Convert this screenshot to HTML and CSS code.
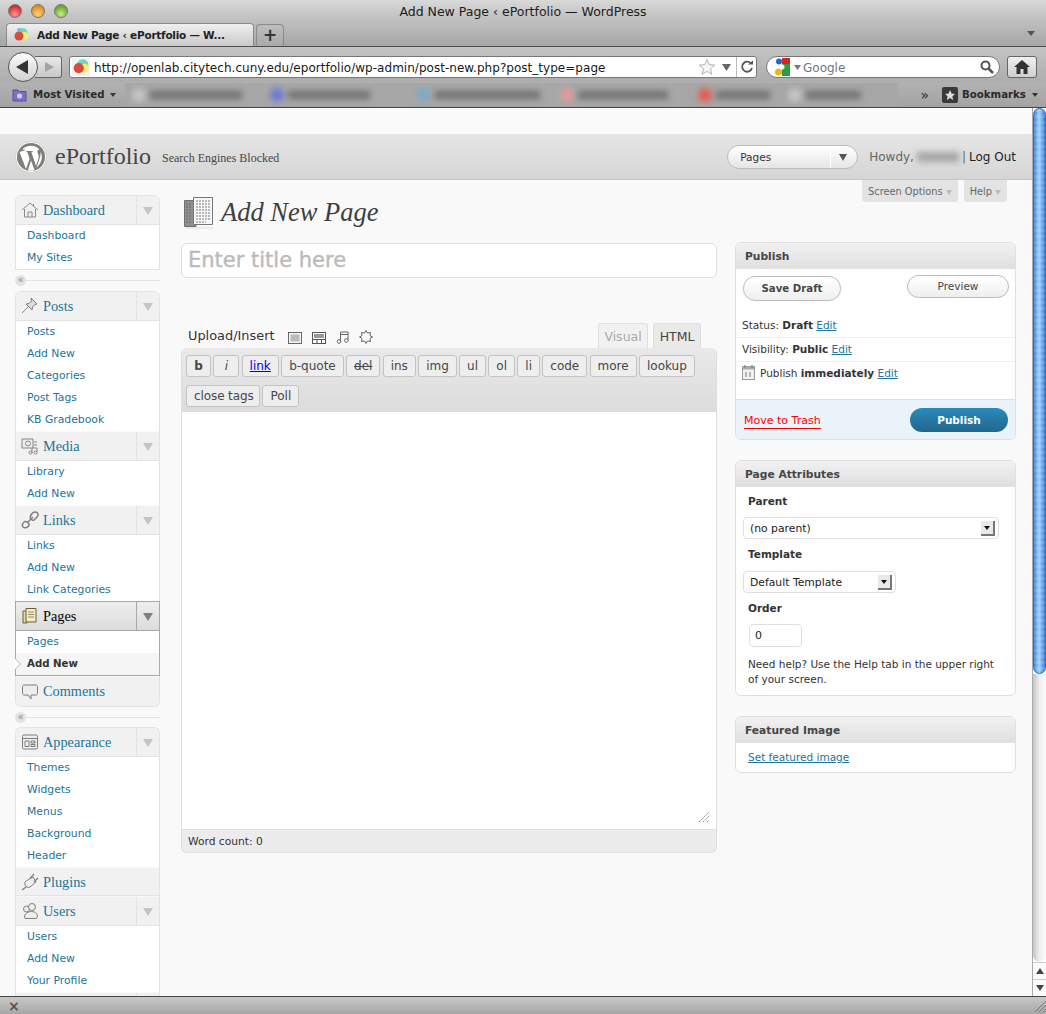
FILE: index.html
```html
<!DOCTYPE html>
<html lang="en">
<head>
    <meta charset="UTF-8">
    <title>Add New Page ‹ ePortfolio — WordPress</title>
    <link rel="stylesheet" href="styles.css">
</head>
<body>
<div class="browser">
    <!-- window title and tabs -->
    <div class="titlebar">
        <div class="title-row">
            <div class="lights">
                <span class="light red"></span>
                <span class="light orange"></span>
                <span class="light green"></span>
            </div>
            <div class="window-title">Add New Page ‹ ePortfolio — WordPress</div>
        </div>
        <div class="tabstrip">
            <div class="tab">
                <svg class="favicon" width="16" height="16" viewBox="0 0 16 16"><circle cx="9.500" cy="6" r="5" fill="#6fd6c4"/><circle cx="11" cy="9" r="4" fill="#f4ee6a"/><circle cx="6" cy="9" r="4.500" fill="#d9493c"/><circle cx="6" cy="3" r="2" fill="#7fb0e8"/></svg>
                <span>Add New Page ‹ ePortfolio — W...</span>
            </div>
            <div class="tab-new">+</div>
            <div class="tab-list"></div>
        </div>
    </div>

    <!-- navigation toolbar -->
    <div class="navbar">
        <div class="nav-buttons">
            <div class="btn-back"><svg width="14" height="16" viewBox="0 0 14 16"><path d="M13 1 L1 8 L13 15 Z" fill="#333"/></svg></div>
            <div class="btn-forward"><svg width="11" height="12" viewBox="0 0 11 12"><path d="M1 1 L10 6 L1 11 Z" fill="#a3a3a3"/></svg></div>
        </div>
        <div class="urlbar">
            <svg class="favicon url-icon" width="18" height="18" viewBox="0 0 16 16"><rect width="16" height="16" fill="#f1f1f1"/><circle cx="9.500" cy="6" r="5" fill="#6fd6c4"/><circle cx="11" cy="9" r="4" fill="#f4ee6a"/><circle cx="6" cy="9" r="4.500" fill="#d9493c"/></svg>
            <span class="url-text">http://openlab.citytech.cuny.edu/eportfolio/wp-admin/post-new.php?post_type=page</span>
            <svg width="18" height="18" viewBox="0 0 18 18"><path d="M9 1.500 L11.200 6.600 L16.800 7.100 L12.500 10.800 L13.800 16.300 L9 13.400 L4.200 16.300 L5.500 10.800 L1.200 7.100 L6.800 6.600 Z" fill="#f4f4f4" stroke="#b5b5b5"/></svg>
            <svg class="url-drop" width="9" height="7" viewBox="0 0 9 7"><path d="M0 0 H9 L4.500 7 Z" fill="#666"/></svg>
            <div class="reload"><svg width="14" height="14" viewBox="0 0 14 14"><path d="M11 3.500 A5 5 0 1 0 12 8" fill="none" stroke="#555" stroke-width="1.800"/><path d="M8 4.500 H13 V0.500 Z" fill="#555"/></svg></div>
        </div>
        <div class="searchbar">
            <svg width="17" height="18" viewBox="0 0 17 18"><rect x="8" y="0" width="8" height="6" fill="#d8232a"/><rect x="8" y="6" width="8" height="12" fill="#2e9c3f"/><circle cx="5" cy="3.500" r="3" fill="#2a62c9"/><circle cx="4.500" cy="14" r="3.500" fill="#edb51f"/><circle cx="8" cy="9" r="2.500" fill="#fff"/></svg>
            <svg class="search-drop" width="7" height="5" viewBox="0 0 7 5"><path d="M0 0 H7 L3.500 5 Z" fill="#777"/></svg>
            <span class="search-text">Google</span>
            <svg width="14" height="14" viewBox="0 0 14 14"><circle cx="5.500" cy="5.500" r="4" fill="none" stroke="#555" stroke-width="2"/><path d="M8.500 8.500 L13 13" stroke="#555" stroke-width="2.500"/></svg>
        </div>
        <div class="btn-home"><svg width="16" height="14" viewBox="0 0 16 14"><path d="M8 0 L16 7 H13.500 V14 H9.500 V9 H6.500 V14 H2.500 V7 H0 Z" fill="#333"/></svg></div>
    </div>

    <!-- bookmarks toolbar -->
    <div class="bookmarks">
        <svg width="15" height="14" viewBox="0 0 15 14"><path d="M1 2 H6 L7 3.500 H14 V13 H1 Z" fill="#7d6fc8" stroke="#5b4fa0"/><circle cx="7.500" cy="8" r="2.500" fill="#d6d0f2"/></svg>
        <span class="bm-label">Most Visited</span>
        <span class="bm-arrow"></span>
        <div class="bm-blurred">
            <span class="bm-dot dot-grey"></span><span class="bm-blur w-a"></span>
            <span class="bm-dot dot-blue"></span><span class="bm-blur w-b"></span>
            <span class="bm-dot dot-teal"></span><span class="bm-blur w-c"></span>
            <span class="bm-dot dot-pink"></span><span class="bm-blur w-d"></span>
            <span class="bm-dot dot-red"></span><span class="bm-blur w-e"></span>
            <span class="bm-dot dot-grey end"></span><span class="bm-blur w-f"></span>
        </div>
        <span class="bm-more">»</span>
        <svg class="bm-star" width="16" height="16" viewBox="0 0 16 16"><rect width="16" height="16" rx="2" fill="#3a3a3a"/><path d="M8 3 L9.500 6.500 L13 7 L10.400 9.300 L11.100 13 L8 11.100 L4.900 13 L5.600 9.300 L3 7 L6.500 6.500 Z" fill="#ddd"/></svg>
        <span class="bm-label right">Bookmarks</span>
        <span class="bm-arrow"></span>
    </div>

    <div class="viewport">
        <div class="page">
            <div class="page-top"></div>
            <div class="wp-head">
                <svg class="wp-logo" width="32" height="32" viewBox="0 0 32 32"><circle cx="16" cy="16" r="15.500" fill="#fff" stroke="#bbb" stroke-width=".6"/><circle cx="16" cy="16" r="14" fill="#817e79"/><path d="M4.500 11 L11 28 L14.500 18 L12.300 10.800 H10.800 V10 H18 V10.800 H16.300 L21 25 L23.500 17.500 C24.500 14 23 13 22.500 11.500 C22 10 23 8.500 24.500 8.500 C21 4.500 13 2.500 7 8.500 H10 V9.300 Z" fill="#fff"/><path d="M16 19.500 L19.500 29 C17.500 30 14.500 30 12.800 29.500 Z M25.500 10.500 C27.500 14 27.500 19 24 24 L21.500 26.500 L24.800 17 C25.700 14 25.700 12 25.500 10.500 Z" fill="#fff"/></svg>
                <span class="site-name">ePortfolio</span>
                <span class="site-note">Search Engines Blocked</span>
                <div class="fav-actions">
                    <span class="fav-label">Pages</span>
                    <span class="fav-toggle"></span>
                </div>
                <div class="howdy">
                    Howdy, <span class="blur-name"></span> | <a href="#">Log Out</a>
                </div>
            </div>

            <div class="wp-body">
                <!-- admin menu -->
                <div class="admin-menu">
                    <div class="menu-group first end">
                        <div class="menu-head">
                            <svg class="menu-icon" width="18" height="18" viewBox="0 0 18 18"><path d="M1 9 L9 2 L17 9 M3.500 8 V16 H14.500 V8 M7 16 V11 H11 V16 M12.500 3 V5.500" fill="none" stroke="#8a8a8a"/></svg>
                            <span class="menu-name">Dashboard</span>
                            <span class="menu-toggle"></span>
                        </div>
                        <ul class="submenu">
                            <li>Dashboard</li>
                            <li>My Sites</li>
                        </ul>
                    </div>
                    <div class="menu-sep"><span class="sep-knob">«</span></div>

                    <div class="menu-group first">
                        <div class="menu-head">
                            <svg class="menu-icon" width="18" height="18" viewBox="0 0 18 18"><path d="M10 1 L16 7 L14 7.500 L11.500 10 L11 13 L5 7 L8 6.500 L10.500 4 Z" fill="#ddd" stroke="#7c7c7c"/><path d="M7 10 L1 16" stroke="#8a8a8a"/></svg>
                            <span class="menu-name">Posts</span>
                            <span class="menu-toggle"></span>
                        </div>
                        <ul class="submenu">
                            <li>Posts</li>
                            <li>Add New</li>
                            <li>Categories</li>
                            <li>Post Tags</li>
                            <li>KB Gradebook</li>
                        </ul>
                    </div>
                    <div class="menu-group">
                        <div class="menu-head">
                            <svg class="menu-icon" width="18" height="18" viewBox="0 0 18 18"><path d="M1 2 H12 V11 H1 Z" fill="#eee" stroke="#858585"/><circle cx="7" cy="6.500" r="2.500" fill="none" stroke="#858585"/><path d="M13 5 H16 M13 8 H16 M11 16 V11 H16 V15" fill="none" stroke="#858585"/><circle cx="9.500" cy="15.500" r="1.500" fill="none" stroke="#858585"/><circle cx="14.500" cy="15.500" r="1.500" fill="none" stroke="#858585"/></svg>
                            <span class="menu-name">Media</span>
                            <span class="menu-toggle"></span>
                        </div>
                        <ul class="submenu">
                            <li>Library</li>
                            <li>Add New</li>
                        </ul>
                    </div>
                    <div class="menu-group">
                        <div class="menu-head">
                            <svg class="menu-icon" width="18" height="18" viewBox="0 0 18 18"><path d="M2 16 C0 13 4 9 6 11 L8 13 C9 15 5 18 2 16 Z M10 8 C8 6 11 1 14 1 C17 1 18 4 16 6 L13 9 C12 10 11 9 10 8 Z M6 12 L12 6" fill="none" stroke="#7f7f7f" stroke-width="1.500"/></svg>
                            <span class="menu-name">Links</span>
                            <span class="menu-toggle"></span>
                        </div>
                        <ul class="submenu">
                            <li>Links</li>
                            <li>Add New</li>
                            <li>Link Categories</li>
                        </ul>
                    </div>
                    <div class="menu-group current">
                        <div class="menu-head">
                            <svg class="menu-icon" width="18" height="18" viewBox="0 0 18 18"><path d="M2 4 H6 V16 H2 Z" fill="#e8d9a8" stroke="#6e5f36"/><path d="M5 1.500 H15 V15 H5 Z" fill="#f4ecca" stroke="#6e5f36"/><path d="M7 5 H13 M7 7.500 H13 M7 10 H13" stroke="#9a8c5e"/></svg>
                            <span class="menu-name">Pages</span>
                            <span class="menu-toggle"></span>
                        </div>
                        <ul class="submenu">
                            <li>Pages</li>
                            <li class="active">Add New</li>
                        </ul>
                    </div>
                    <div class="menu-group end last">
                        <div class="menu-head">
                            <svg class="menu-icon" width="18" height="18" viewBox="0 0 18 18"><path d="M3 2 H15 C16 2 16.500 3 16.500 4 V10 C16.500 11 16 12 15 12 H10 V16 L7 12 H3 C2 12 1.500 11 1.500 10 V4 C1.500 3 2 2 3 2 Z" fill="#eee" stroke="#7d7d7d"/></svg>
                            <span class="menu-name">Comments</span>
                        </div>
                    </div>
                    <div class="menu-sep tight"><span class="sep-knob">«</span></div>

                    <div class="menu-group first">
                        <div class="menu-head">
                            <svg class="menu-icon" width="18" height="18" viewBox="0 0 18 18"><rect x="1.500" y="2" width="15" height="14" rx="1.500" fill="#eee" stroke="#7d7d7d"/><path d="M1.500 5.500 H16.500 M4 8 H8 V13.500 H4 Z M10 8 H14 V10 H10 Z M10 11.500 H14 V13.500 H10 Z" fill="none" stroke="#7d7d7d"/></svg>
                            <span class="menu-name">Appearance</span>
                            <span class="menu-toggle"></span>
                        </div>
                        <ul class="submenu">
                            <li>Themes</li>
                            <li>Widgets</li>
                            <li>Menus</li>
                            <li>Background</li>
                            <li>Header</li>
                        </ul>
                    </div>
                    <div class="menu-group">
                        <div class="menu-head short">
                            <svg class="menu-icon" width="18" height="18" viewBox="0 0 18 18"><path d="M5 8 L12 4 L15 9 L9 14 C7 15 5 14 4 12 C3.500 10.500 4 9 5 8 Z" fill="#eee" stroke="#7d7d7d"/><path d="M9 5.500 L13 1 M13 9 L17 5 M5 14 L1 17" fill="none" stroke="#7d7d7d" stroke-width="1.300"/></svg>
                            <span class="menu-name">Plugins</span>
                        </div>
                    </div>
                    <div class="menu-group">
                        <div class="menu-head">
                            <svg class="menu-icon" width="18" height="18" viewBox="0 0 18 18"><circle cx="5.500" cy="7" r="3" fill="#eee" stroke="#808080"/><circle cx="11" cy="5" r="3.500" fill="#eee" stroke="#808080"/><path d="M4 16.500 C2 13 6 9.500 10.500 9.500 C15 9.500 18 13 15.500 16.500 Z" fill="#eee" stroke="#808080"/></svg>
                            <span class="menu-name">Users</span>
                            <span class="menu-toggle"></span>
                        </div>
                        <ul class="submenu">
                            <li>Users</li>
                            <li>Add New</li>
                            <li>Your Profile</li>
                        </ul>
                    </div>
                    <div class="menu-group">
                        <div class="menu-head"><span class="menu-name"></span><span class="menu-toggle"></span></div>
                    </div>
                </div>

                <!-- main column -->
                <div class="main-col">
                    <div class="page-title">
                        <svg width="36" height="36" viewBox="0 0 36 36"><path d="M1.500 3.500 H13 V29.500 H1.500 Z" fill="#8f8f8f" stroke="#6e6e6e"/><path d="M3 7 H9 M3 10 H9 M3 13 H9 M3 16 H9 M3 19 H9 M3 22 H9 M3 25 H9" stroke="#6a6a6a" stroke-dasharray="2 1"/><path d="M10.500 0.500 H29.500 V27.500 H10.500 Z" fill="#f6f6f6" stroke="#777"/><path d="M13 4 H27 M13 7 H27 M13 10 H27 M13 13 H27 M13 16 H27 M13 19 H27 M13 22 H27 M13 25 H23" stroke="#7a7a7a" stroke-dasharray="2 1"/><path d="M3 31 H30" stroke="#ddd"/></svg>
                        <h2>Add New Page</h2>
                    </div>
                    <div class="title-box">Enter title here</div>

                    <div class="editor-top">
                        <span class="upload-label">Upload/Insert</span>
                        <svg class="media-btn" width="14" height="12" viewBox="0 0 14 12"><rect x="0.500" y="0.500" width="13" height="11" fill="#f4f4f4" stroke="#666"/><rect x="2.500" y="2.500" width="9" height="7" fill="#bbb"/></svg>
                        <svg class="media-btn" width="14" height="12" viewBox="0 0 14 12"><rect x="0.500" y="0.500" width="13" height="11" fill="#fff" stroke="#555"/><path d="M0.500 7.500 H13.500 M5 7.500 V11.500 M9.500 7.500 V11.500" stroke="#555"/><rect x="2" y="2" width="10" height="4" fill="#999"/></svg>
                        <svg class="media-btn" width="13" height="14" viewBox="0 0 13 14"><path d="M4.500 11.500 V2 H12 V10" fill="none" stroke="#666"/><path d="M4.500 4.500 H12" stroke="#666"/><circle cx="3" cy="11.500" r="1.800" fill="none" stroke="#666"/><circle cx="10.300" cy="10.500" r="1.800" fill="none" stroke="#666"/></svg>
                        <svg class="media-btn" width="14" height="14" viewBox="0 0 14 14"><path d="M7 0.500 L8.400 3 L11.500 2.500 L11 5.600 L13.500 7 L11 8.400 L11.500 11.500 L8.400 11 L7 13.500 L5.600 11 L2.500 11.500 L3 8.400 L0.500 7 L3 5.600 L2.500 2.500 L5.600 3 Z" fill="#fafafa" stroke="#666"/></svg>
                        <div class="editor-tabs">
                            <span class="editor-tab">Visual</span>
                            <span class="editor-tab on">HTML</span>
                        </div>
                    </div>
                    <div class="editor">
                        <div class="quicktags">
                            <span class="qt bold">b</span>
                            <span class="qt ital">i</span>
                            <span class="qt link">link</span>
                            <span class="qt">b-quote</span>
                            <span class="qt strike">del</span>
                            <span class="qt">ins</span>
                            <span class="qt">img</span>
                            <span class="qt">ul</span>
                            <span class="qt">ol</span>
                            <span class="qt">li</span>
                            <span class="qt">code</span>
                            <span class="qt">more</span>
                            <span class="qt">lookup</span>
                            <span class="qt close">close tags</span>
                            <span class="qt">Poll</span>
                        </div>
                        <div class="editor-area">
                            <svg class="resize-grip" width="12" height="12" viewBox="0 0 12 12"><path d="M1 11 L11 1 M5 11 L11 5 M9 11 L11 9" stroke="#888" stroke-dasharray="1.500 .7"/></svg>
                        </div>
                        <div class="word-count">Word count: 0</div>
                    </div>
                </div>

                <!-- side column -->
                <div class="side-col">
                    <div class="screen-tabs">
                        <span class="screen-tab">Screen Options<i class="tab-arrow"></i></span>
                        <span class="screen-tab">Help<i class="tab-arrow"></i></span>
                    </div>

                    <div class="postbox publish">
                        <h3>Publish</h3>
                        <div class="pub-buttons">
                            <span class="pill save">Save Draft</span>
                            <span class="pill preview">Preview</span>
                        </div>
                        <div class="pub-row">Status: <b>Draft</b> <a href="#">Edit</a></div>
                        <div class="pub-row">Visibility: <b>Public</b> <a href="#">Edit</a></div>
                        <div class="pub-row plain">
                            <svg width="13" height="15" viewBox="0 0 13 15"><rect x="0.500" y="1.500" width="12" height="13" fill="#f2f2f2" stroke="#999"/><rect x="0.500" y="1.500" width="12" height="3" fill="#aaa"/><path d="M3 0 V3 M10 0 V3 M4 7 V12 M8 7 V12" stroke="#777"/></svg>
                            <span>Publish <b>immediately</b> <a href="#">Edit</a></span>
                        </div>
                        <div class="pub-foot">
                            <a class="trash" href="#">Move to Trash</a>
                            <span class="btn-publish">Publish</span>
                        </div>
                    </div>

                    <div class="postbox attributes">
                        <h3>Page Attributes</h3>
                        <div class="box-body">
                            <p class="field-label parent">Parent</p>
                            <div class="fake-select wide"><span class="sel-text">(no parent)</span><span class="sel-arrow"></span></div>
                            <p class="field-label">Template</p>
                            <div class="fake-select"><span class="sel-text">Default Template</span><span class="sel-arrow"></span></div>
                            <p class="field-label order">Order</p>
                            <div class="order-input">0</div>
                            <p class="help-note">Need help? Use the Help tab in the upper right of your screen.</p>
                        </div>
                    </div>

                    <div class="postbox featured">
                        <h3>Featured Image</h3>
                        <div class="feat-body"><a href="#">Set featured image</a></div>
                    </div>
                </div>
            </div>
        </div>

        <div class="scrollbar">
            <div class="scroll-thumb"></div>
            <div class="scroll-track"></div>
            <div class="scroll-btn"><span class="arr-up"></span></div>
            <div class="scroll-btn"><span class="arr-down"></span></div>
        </div>
    </div>

    <div class="statusbar">
        <span class="status-x">×</span>
        <svg width="12" height="12" viewBox="0 0 12 12"><path d="M1 12 L12 1 M5 12 L12 5 M9 12 L12 9" stroke="#777"/></svg>
    </div>
</div>
</body>
</html>
```
FILE: styles.css
```css
* {
    box-sizing: border-box;
}
html, body {
    margin: 0;
    height: 100%;
    overflow: hidden;
}
body {
    font-family: "DejaVu Sans", Arial, sans-serif;
    font-size: 11px;
    color: #333;
}
a {
    color: #21759b;
}
ul {
    list-style: none;
    margin: 0;
    padding: 0;
}
.browser {
    width: 1046px;
    height: 1014px;
    display: flex;
    flex-direction: column;
    overflow: hidden;
}

/* title bar + tabs */
.titlebar {
    height: 47px;
    background: linear-gradient(#d9d9d9 0, #c6c6c6 30%, #a6a6a6 100%);
    border-bottom: 1px solid #4d4d4d;
}
.title-row {
    display: flex;
    height: 23px;
}
.lights {
    width: 100px;
    display: flex;
    gap: 9px;
    padding: 4px 0 0 8px;
}
.light {
    width: 14px;
    height: 14px;
    border-radius: 50%;
    border: 1px solid #777;
}
.light.red {
    background: radial-gradient(circle at 50% 75%, #ff9a9a, #d92b2b 70%);
}
.light.orange {
    background: radial-gradient(circle at 50% 75%, #ffd486, #e58a1c 70%);
}
.light.green {
    background: radial-gradient(circle at 50% 75%, #c6ec8c, #69a82e 70%);
}
.window-title {
    flex: 1;
    line-height: 23px;
    text-align: center;
    font-size: 12.500px;
    color: #1c1c1c;
    padding-right: 100px;
}
.tabstrip {
    display: flex;
    align-items: flex-end;
    height: 23px;
    padding-left: 6px;
}
.tab {
    width: 248px;
    height: 23px;
    display: flex;
    align-items: center;
    gap: 8px;
    padding-left: 6px;
    font-size: 10.500px;
    letter-spacing: -0.25px;
    font-weight: bold;
    color: #222;
    background: linear-gradient(#f0f0f0, #c9c9c9);
    border: 1px solid #8a8a8a;
    border-bottom: 0;
    border-radius: 4px 4px 0 0;
}
.tab-new {
    width: 28px;
    height: 22px;
    margin-left: 2px;
    text-align: center;
    font-size: 17px;
    line-height: 20px;
    font-weight: bold;
    color: #333;
    background: linear-gradient(#bdbdbd, #a9a9a9);
    border: 1px solid #8a8a8a;
    border-bottom: 0;
    border-radius: 4px 4px 0 0;
}
.tab-list {
    margin-left: auto;
    margin-right: 11px;
    margin-bottom: 10px;
    border: 4px solid transparent;
    border-top: 5px solid #555;
    border-bottom: 0;
}

/* nav toolbar */
.navbar {
    height: 35px;
    display: flex;
    align-items: center;
    padding: 5px 9px 0 8px;
    background: linear-gradient(#c4c4c4, #adadad);
}
.nav-buttons {
    display: flex;
    align-items: center;
    width: 54px;
    margin-right: 7px;
}
.btn-back {
    width: 30px;
    height: 30px;
    flex-shrink: 0;
    border-radius: 50%;
    display: flex;
    align-items: center;
    justify-content: center;
    background: linear-gradient(#fbfbfb, #d0d0d0);
    border: 1px solid #555;
    padding-right: 3px;
    position: relative;
    z-index: 1;
}
.btn-forward {
    width: 27px;
    height: 22px;
    flex-shrink: 0;
    margin-left: -3px;
    display: flex;
    align-items: center;
    justify-content: center;
    padding-left: 2px;
    background: linear-gradient(#e9e9e9, #c8c8c8);
    border: 1px solid #666;
    border-left: 0;
    border-radius: 0 3px 3px 0;
}
.urlbar {
    width: 688px;
    height: 22px;
    display: flex;
    align-items: center;
    margin-right: 9px;
    padding-left: 2px;
    background: #fff;
    border: 1px solid #777;
    border-radius: 3px;
}
.url-icon {
    margin-right: 4px;
}
.url-text {
    flex: 1;
    padding-top: 1px;
    font-size: 12px;
    letter-spacing: 0.03px;
    color: #1a1a1a;
    white-space: nowrap;
}
.url-drop {
    margin: 0 5px 0 6px;
}
.reload {
    width: 20px;
    height: 20px;
    display: flex;
    align-items: center;
    justify-content: center;
    border-left: 1px solid #bbb;
}
.searchbar {
    width: 234px;
    height: 22px;
    display: flex;
    align-items: center;
    padding: 0 5px 0 7px;
    margin-right: 7px;
    background: #fff;
    border: 1px solid #777;
    border-radius: 11px;
}
.search-drop {
    margin: 0 2px 0 3px;
}
.search-text {
    flex: 1;
    padding-top: 1px;
    font-size: 12px;
    color: #6f7780;
}
.btn-home {
    width: 30px;
    height: 22px;
    display: flex;
    align-items: center;
    justify-content: center;
    background: linear-gradient(#f0f0f0, #cfcfcf);
    border: 1px solid #666;
    border-radius: 3px;
}

/* bookmarks */
.bookmarks {
    height: 26px;
    display: flex;
    align-items: center;
    padding: 0 8px 0 12px;
    background: linear-gradient(#b2b2b2, #a3a3a3);
    border-bottom: 1px solid #444;
}
.bm-label {
    margin-left: 6px;
    font-size: 10.200px;
    font-weight: bold;
    color: #2a2a2a;
    white-space: nowrap;
}
.bm-label.right {
    margin-left: 4px;
}
.bm-arrow {
    margin-left: 6px;
    border: 3px solid transparent;
    border-top: 4px solid #333;
    border-bottom: 0;
}
.bm-blurred {
    width: 773px;
    flex-shrink: 0;
    height: 23px;
    margin-left: 9px;
    display: flex;
    align-items: center;
    gap: 4px;
    padding-left: 7px;
    background: #a7a7a7;
}
.bm-dot {
    width: 14px;
    height: 14px;
    border-radius: 50%;
    filter: blur(3px);
}
.dot-grey {
    background: #c6c6c6;
}
.dot-grey.end {
    margin-left: 14px;
}
.dot-blue {
    background: #6a79d8;
    margin-left: 24px;
}
.dot-teal {
    background: #7fa9c9;
    margin-left: 43px;
}
.dot-pink {
    background: #e59a9a;
    margin-left: 16px;
}
.dot-red {
    background: #e65a50;
    margin-left: 26px;
}
.bm-blur {
    height: 8px;
    background: #707070;
    filter: blur(3px);
}
.w-a { width: 92px; }
.w-b { width: 82px; }
.w-c { width: 105px; }
.w-d { width: 90px; }
.w-e { width: 54px; }
.w-f { width: 55px; }
.bm-more {
    margin-left: 22px;
    margin-right: 13px;
    font-size: 14px;
    color: #333;
}

/* page */
.viewport {
    flex: 1;
    display: flex;
    min-height: 0;
}
.page {
    flex: 1;
    overflow: hidden;
    background: #f9f9f9;
}
.page-top {
    height: 26px;
    background: #fbfbfb;
}
.wp-head {
    height: 46px;
    display: flex;
    align-items: center;
    padding: 0 16px 0 15px;
    background: linear-gradient(#e6e6e6, #d5d5d5);
    border-bottom: 1px solid #c6c6c6;
}
.site-name {
    margin-left: 8px;
    font-family: "Liberation Serif", serif;
    font-size: 24px;
    color: #464646;
}
.site-note {
    margin-left: 11px;
    margin-top: 3px;
    font-family: "Liberation Serif", serif;
    font-size: 12px;
    color: #464646;
}
.fav-actions {
    margin-left: auto;
    width: 131px;
    height: 24px;
    display: flex;
    align-items: center;
    background: linear-gradient(#fff, #e5e5e5);
    border: 1px solid #bbb;
    border-radius: 12px;
}
.fav-label {
    flex: 1;
    padding-left: 12px;
    font-size: 10.500px;
    color: #333;
}
.fav-toggle {
    width: 27px;
    height: 22px;
    border-left: 1px solid #fff;
    position: relative;
}
.fav-toggle::after {
    content: "";
    display: block;
    margin: 8px 0 0 8px;
    width: 0;
    border: 4px solid transparent;
    border-top: 7px solid #555;
    border-bottom: 0;
}
.howdy {
    margin-left: 11px;
    font-size: 12px;
    color: #666;
    white-space: nowrap;
    display: flex;
    align-items: center;
    gap: 3px;
}
.howdy a {
    color: #222;
    text-decoration: none;
}
.blur-name {
    width: 42px;
    height: 10px;
    background: #a5a5a5;
    filter: blur(3px);
}
.wp-body {
    display: flex;
    align-items: flex-start;
    padding-left: 15px;
}

/* admin menu */
.admin-menu {
    width: 145px;
    margin-top: 15px;
}
.menu-group {
    border-left: 1px solid #e3e3e3;
    border-right: 1px solid #e3e3e3;
}
.menu-group.end {
    border-bottom: 1px solid #e3e3e3;
}
.menu-group.first {
    border-top: 1px solid #e3e3e3;
    border-radius: 6px 6px 0 0;
}
.menu-group.first .menu-head {
    border-top: 0;
    border-radius: 6px 6px 0 0;
    height: 29px;
}
.menu-group.last {
    border-radius: 0 0 6px 6px;
}
.menu-group.last .menu-head {
    border-radius: 0 0 6px 6px;
    border-bottom: 0;
}
.menu-head {
    height: 30px;
    display: flex;
    align-items: center;
    padding-left: 5px;
    background: #f1f1f1;
    border-top: 1px solid #f9f9f9;
    border-bottom: 1px solid #e3e3e3;
}
.menu-head.short {
    height: 29px;
    padding-top: 1px;
}
.menu-icon {
    flex-shrink: 0;
}
.menu-name {
    flex: 1;
    margin-left: 4px;
    font-family: "Liberation Serif", serif;
    font-size: 14.300px;
    color: #21759b;
}
.menu-toggle {
    width: 23px;
    height: 100%;
    border-left: 1px solid #e3e3e3;
}
.menu-toggle::after {
    content: "";
    display: block;
    width: 0;
    margin: 11px 0 0 6px;
    border: 5px solid transparent;
    border-top: 8px solid #c4c4c4;
    border-bottom: 0;
}
.submenu {
    background: #fff;
}
.submenu li {
    height: 22px;
    line-height: 21px;
    padding-left: 11px;
    font-size: 10.800px;
    color: #21759b;
}
.menu-group.current {
    border: 1px solid #a8a8a8;
    position: relative;
}
.menu-group.current .menu-head {
    height: 29px;
    background: linear-gradient(#eeeeee, #dcdcdc);
    border-top: 0;
    border-bottom-color: #a8a8a8;
}
.menu-group.current .menu-name {
    color: #000;
}
.menu-group.current .menu-toggle {
    border-left-color: #a8a8a8;
}
.menu-group.current .menu-toggle::after {
    border-top-color: #7f7f7f;
}
.submenu li.active {
    background: #f5f5f5;
    color: #333;
    font-size: 10.200px;
    font-weight: bold;
    position: relative;
}
.submenu li.active::before,
.submenu li.active::after {
    content: "";
    position: absolute;
    top: 5px;
    left: -1px;
    border: 6px solid transparent;
    border-left: 6px solid #b0b0b0;
    border-right: 0;
}
.submenu li.active::after {
    top: 6px;
    left: -1px;
    border-width: 5px 0 5px 5px;
    border-left-color: #fff;
}
.menu-sep {
    height: 21px;
    display: flex;
    align-items: center;
}
.menu-sep.tight {
    height: 20px;
}
.menu-sep::after {
    content: "";
    flex: 1;
    height: 1px;
    background: #e3e3e3;
}
.sep-knob {
    width: 11px;
    height: 11px;
    border-radius: 50%;
    background: #e3e3e3;
    color: #888;
    font-size: 10px;
    line-height: 9px;
    text-align: center;
}

/* main column */
.main-col {
    width: 536px;
    margin-left: 21px;
}
.page-title {
    display: flex;
    align-items: center;
    height: 36px;
    margin: 17px 0 10px 2px;
    gap: 2px;
}
.page-title h2 {
    margin: -6px 0 0;
    font-family: "Liberation Serif", serif;
    font-style: italic;
    font-weight: normal;
    font-size: 26.500px;
    color: #3f3f3f;
}
.title-box {
    height: 35px;
    line-height: 33px;
    padding-left: 6px;
    font-size: 21px;
    color: #bbb;
    -webkit-text-stroke: 0.4px #bbb;
    background: #fff;
    border: 1px solid #dfdfdf;
    border-radius: 6px;
}
.editor-top {
    display: flex;
    align-items: flex-end;
    height: 45px;
    margin-top: 25px;
    padding-left: 7px;
}
.upload-label {
    font-size: 12.900px;
    color: #333;
    margin-right: 14px;
    margin-bottom: 5px;
}
.media-btn {
    margin: 0 10px 4px 0;
}
.editor-tabs {
    display: flex;
    margin-left: auto;
    gap: 5px;
    margin-right: 16px;
}
.editor-tab {
    height: 25px;
    line-height: 25px;
    padding: 0 5.500px;
    font-size: 12.500px;
    color: #aaa;
    background: #f1f1f1;
    border: 1px solid #dfdfdf;
    border-bottom: 0;
    border-radius: 3px 3px 0 0;
}
.editor-tab.on {
    color: #444;
    background: #e9e9e9;
}
.editor {
    border: 1px solid #dfdfdf;
    border-top: 0;
    border-radius: 6px;
    background: #ececec;
}
.quicktags {
    display: flex;
    flex-wrap: wrap;
    align-content: flex-start;
    gap: 8px 2.300px;
    height: 64px;
    padding: 7px 4px 0;
    background: linear-gradient(#e9e9e9, #dcdcdc);
    border-radius: 6px 6px 0 0;
}
.qt {
    height: 22px;
    line-height: 20px;
    padding: 0 7px;
    font-size: 12px;
    color: #464646;
    background: #eeeeee;
    border: 1px solid #c3c3c3;
    border-radius: 3px;
}
.qt.bold {
    width: 25px;
    text-align: center;
    font-weight: bold;
}
.qt.ital {
    width: 26px;
    text-align: center;
    font-style: italic;
}
.qt.link {
    color: #00e;
    text-decoration: underline;
}
.qt.strike {
    text-decoration: line-through;
}
.qt.close {
    padding: 0 5.500px 0 7px;
    letter-spacing: -0.1px;
}
.editor-area {
    height: 417px;
    position: relative;
    background: #fff;
}
.resize-grip {
    position: absolute;
    right: 6px;
    bottom: 6px;
}
.word-count {
    height: 23px;
    line-height: 23px;
    padding-left: 6px;
    font-size: 10.700px;
    border-top: 1px solid #dfdfdf;
    border-radius: 0 0 6px 6px;
}

/* side column */
.side-col {
    width: 281px;
    margin-left: 18px;
    font-size: 10.500px;
}
.screen-tabs {
    display: flex;
    justify-content: flex-end;
    gap: 6px;
    padding-right: 9px;
    height: 22px;
    margin-bottom: 40px;
}
.screen-tab {
    height: 22px;
    line-height: 23px;
    padding: 0 6px;
    font-size: 9.800px;
    color: #666;
    background: #e3e3e3;
    border-radius: 0 0 3px 3px;
}
.tab-arrow {
    display: inline-block;
    margin-left: 3px;
    border: 3.500px solid transparent;
    border-top: 5px solid #bbb;
    border-bottom: 0;
}
.postbox {
    background: #fff;
    border: 1px solid #dfdfdf;
    border-radius: 6px;
    margin-bottom: 20px;
    overflow: hidden;
}
.postbox h3 {
    margin: 0;
    height: 26px;
    line-height: 28px;
    padding-left: 9px;
    font-size: 10.700px;
    font-weight: bold;
    color: #464646;
    background: linear-gradient(#f1f1f1, #dfdfdf);
}
.pub-buttons {
    display: flex;
    justify-content: space-between;
    align-items: flex-start;
    height: 45px;
    padding: 6px 6px 0 7px;
}
.pill {
    text-align: center;
    background: linear-gradient(#fff, #efefef);
    border: 1px solid #bbb;
    border-radius: 12px;
    color: #464646;
}
.pill.save {
    width: 98px;
    height: 25px;
    line-height: 23px;
    margin-top: 1px;
    font-size: 10.200px;
    font-weight: bold;
}
.pill.preview {
    width: 102px;
    height: 23px;
    line-height: 21px;
}
.pub-row {
    height: 24px;
    line-height: 23px;
    padding-left: 6px;
    color: #333;
    border-bottom: 1px solid #f0f0f0;
}
.pub-row.plain {
    height: 38px;
    display: flex;
    gap: 5px;
    border-bottom: 1px solid #dfdfdf;
}
.pub-row.plain svg {
    margin-top: 3px;
}
.pub-foot {
    height: 39px;
    display: flex;
    align-items: center;
    justify-content: space-between;
    padding: 0 7px 0 8px;
    background: #eaf2fa;
}
.trash {
    color: #f00;
    font-size: 11px;
    line-height: 15px;
    margin-top: 3px;
    text-decoration: none;
    border-bottom: 1px solid #f00;
}
.btn-publish {
    width: 98px;
    height: 24px;
    line-height: 24px;
    text-align: center;
    color: #fff;
    font-weight: bold;
    background: linear-gradient(#2a8bbb, #21668c);
    border-radius: 12px;
}
.box-body {
    padding: 0 12px 8px 7px;
}
.field-label {
    margin: 0;
    height: 32px;
    line-height: 30px;
    padding-left: 5px;
    font-weight: bold;
    color: #333;
}
.field-label.parent {
    height: 30px;
    line-height: 28px;
}
.field-label.order {
    height: 31px;
}
.fake-select {
    width: 153px;
    height: 22px;
    line-height: 20px;
    display: flex;
    justify-content: space-between;
    align-items: center;
    padding: 0 0 0 6px;
    font-size: 10.800px;
    color: #222;
    background: #fff;
    border: 1px solid #dfdfdf;
    border-radius: 4px;
}
.fake-select.wide {
    width: 256px;
}
.sel-text {
    padding-top: 2px;
}
.sel-arrow {
    width: 14px;
    height: 15px;
    margin-right: 3px;
    background: #e9e9e9;
    border-right: 2px solid #777;
    border-bottom: 2px solid #777;
    position: relative;
}
.sel-arrow::after {
    content: "";
    position: absolute;
    left: 3px;
    top: 5px;
    border: 3px solid transparent;
    border-top: 4px solid #111;
    border-bottom: 0;
}
.order-input {
    width: 53px;
    height: 23px;
    line-height: 21px;
    margin-left: 6px;
    padding-left: 5px;
    font-size: 11px;
    color: #222;
    background: #fff;
    border: 1px solid #dfdfdf;
    border-radius: 4px;
}
.help-note {
    margin: 10px 0 0 5px;
    line-height: 15px;
    color: #333;
}
.feat-body {
    height: 29px;
    line-height: 28px;
    padding-left: 12px;
}

/* scrollbar + status */
.scrollbar {
    width: 14px;
    display: flex;
    flex-direction: column;
    border-left: 1px solid #aaa;
    background: #fff;
}
.scroll-thumb {
    height: 566px;
    border-radius: 7px;
    border: 1px solid #2c6bb8;
    background: repeating-linear-gradient(180deg, rgba(255,255,255,.12) 0 3px, rgba(0,0,0,0) 3px 6px), linear-gradient(90deg, #3f85d8, #a8d0fa 45%, #6fb0f2 70%, #3a7dcf);
}
.scroll-track {
    flex: 1;
    background: linear-gradient(90deg, #c4c4c4, #efefef 50%, #fafafa);
    border-radius: 0 0 7px 7px;
}
.scroll-btn {
    height: 17px;
    display: flex;
    align-items: center;
    justify-content: center;
    border-top: 1px solid #ccc;
    background: #fafafa;
}
.arr-up {
    border: 4px solid transparent;
    border-bottom: 6px solid #444;
    border-top: 0;
}
.arr-down {
    border: 4px solid transparent;
    border-top: 6px solid #444;
    border-bottom: 0;
}
.statusbar {
    height: 18px;
    display: flex;
    align-items: center;
    justify-content: space-between;
    padding-left: 8px;
    background: linear-gradient(#c8c8c8, #a6a6a6);
    border-top: 1px solid #444;
}
.status-x {
    font-size: 14px;
    font-weight: bold;
    color: #555;
}
```
